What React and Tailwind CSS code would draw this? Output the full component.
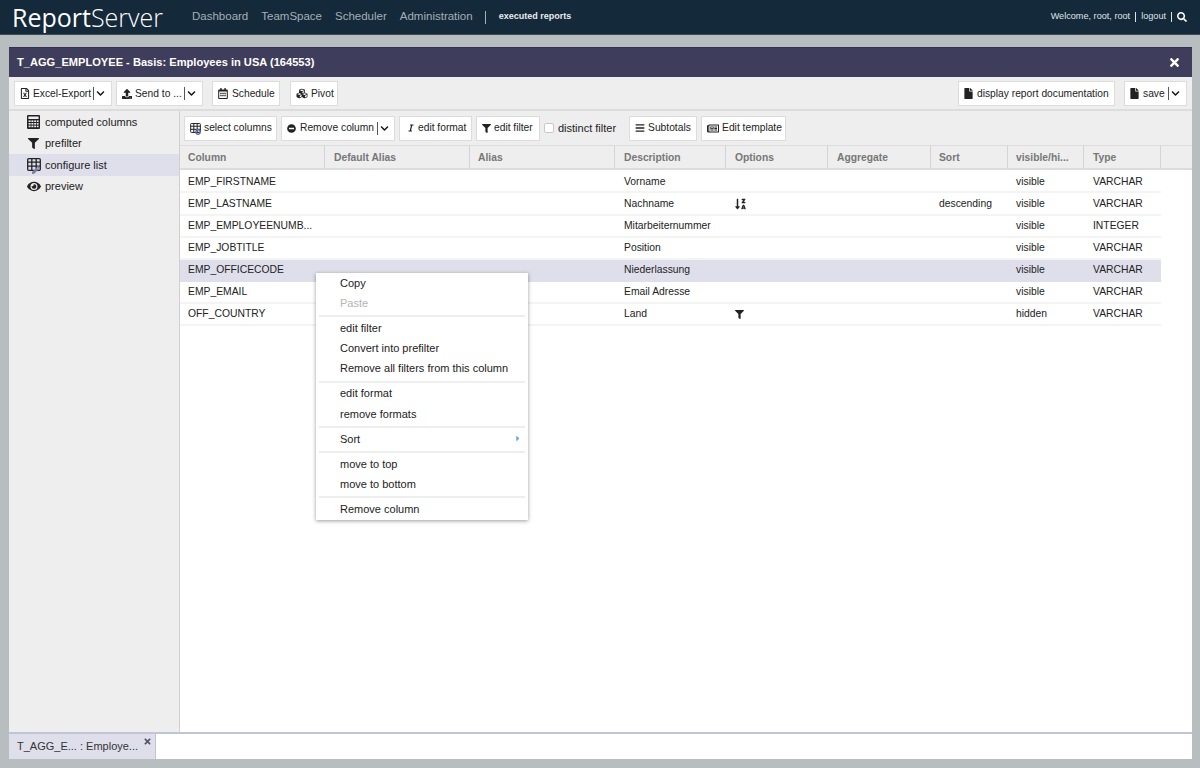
import { FaRegFileExcel, FaChevronDown, FaUpload, FaRegCalendarAlt, FaCubes, FaFile, FaFilter, FaEye, FaMinusCircle, FaItalic, FaBars, FaRegNewspaper, FaSortAlphaDownAlt, FaTimes, FaSearch, FaPen, FaPlusCircle, FaCaretRight } from 'react-icons/fa'

const columns = [
  { name: 'Column', w: 'w-[145px] pl-[8px]' },
  { name: 'Default Alias', w: 'w-[145px] pl-[9px]' },
  { name: 'Alias', w: 'w-[145px] pl-[8px]' },
  { name: 'Description', w: 'w-[111px] pl-[9px]' },
  { name: 'Options', w: 'w-[102px] pl-[9px]' },
  { name: 'Aggregate', w: 'w-[103px] pl-[9px]' },
  { name: 'Sort', w: 'w-[77px] pl-[8px]' },
  { name: 'visible/hi...', w: 'w-[76px] pl-[8px]' },
  { name: 'Type', w: 'w-[77px] pl-[9px]' },
]

const rows = [
  { col: 'EMP_FIRSTNAME', desc: 'Vorname', vis: 'visible', type: 'VARCHAR' },
  { col: 'EMP_LASTNAME', desc: 'Nachname', opt: 'sort', sort: 'descending', vis: 'visible', type: 'VARCHAR' },
  { col: 'EMP_EMPLOYEENUMB...', desc: 'Mitarbeiternummer', vis: 'visible', type: 'INTEGER' },
  { col: 'EMP_JOBTITLE', desc: 'Position', vis: 'visible', type: 'VARCHAR' },
  { col: 'EMP_OFFICECODE', desc: 'Niederlassung', vis: 'visible', type: 'VARCHAR', selected: true },
  { col: 'EMP_EMAIL', desc: 'Email Adresse', vis: 'visible', type: 'VARCHAR' },
  { col: 'OFF_COUNTRY', desc: 'Land', opt: 'filter', vis: 'hidden', type: 'VARCHAR' },
]

const menu = [
  ['Copy', '-Paste'],
  ['edit filter', 'Convert into prefilter', 'Remove all filters from this column'],
  ['edit format', 'remove formats'],
  ['>Sort'],
  ['move to top', 'move to bottom'],
  ['Remove column'],
]

function GridIcon({ className = '' }) {
  return (
    <svg viewBox="0 0 14 13" className={className} fill="none" stroke="currentColor" strokeWidth="1.3">
      <rect x="0.7" y="0.7" width="12.6" height="11.6" rx="1" />
      <path d="M0.7 4.2H13.3M0.7 8.2H13.3M4.8 0.7V12.3M9.2 0.7V12.3" />
    </svg>
  )
}

function CalcIcon({ className = '' }) {
  return (
    <svg viewBox="0 0 13 14" className={className} fill="currentColor">
      <path d="M1 0H12A1 1 0 0 1 13 1V13A1 1 0 0 1 12 14H1A1 1 0 0 1 0 13V1A1 1 0 0 1 1 0ZM1.4 1.4V4H11.6V1.4Z" fillRule="evenodd" />
      <g fill="#eeeeee">
        <rect x="1.6" y="5.4" width="2" height="1.6" />
        <rect x="4.4" y="5.4" width="2" height="1.6" />
        <rect x="7.2" y="5.4" width="2" height="1.6" />
        <rect x="10" y="5.4" width="1.6" height="1.6" />
        <rect x="1.6" y="8" width="2" height="1.6" />
        <rect x="4.4" y="8" width="2" height="1.6" />
        <rect x="7.2" y="8" width="2" height="1.6" />
        <rect x="10" y="8" width="1.6" height="1.6" />
        <rect x="1.6" y="10.6" width="2" height="1.6" />
        <rect x="4.4" y="10.6" width="2" height="1.6" />
        <rect x="7.2" y="10.6" width="2" height="1.6" />
        <rect x="10" y="10.6" width="1.6" height="1.6" />
      </g>
    </svg>
  )
}

function Btn({ icon, children, drop, className = '' }) {
  return (
    <button className={`h-[25px] pl-[5px] shrink-0 flex items-center gap-[3px] bg-white border border-[#dcdcdc] text-[10.25px] text-[#222] whitespace-nowrap ${className}`}>
      <span className="shrink-0 flex items-center">{icon}</span>
      <span>{children}</span>
      {drop && (
        <span className="flex items-center gap-[2px] -ml-[1px]">
          <span className="w-px h-[13px] bg-[#555]" />
          <FaChevronDown className="w-[9px] h-[9px] text-[#111] shrink-0" />
        </span>
      )}
    </button>
  )
}

function SideItem({ icon, label, active }) {
  return (
    <div className={`h-[21.5px] pl-[17px] flex items-center gap-[4px] text-[11px] text-[#222] ${active ? 'bg-[#dfdfeb]' : ''}`}>
      <span className="w-[15px] h-[15px] flex items-center justify-center text-[#222] relative shrink-0">{icon}</span>
      <span>{label}</span>
    </div>
  )
}

export default function App() {
  return (
    <div className="w-[1200px] h-[768px] overflow-hidden bg-[#b8bec0] flex flex-col font-['Liberation_Sans',Arial,sans-serif] relative">
      <div className="h-[35px] shrink-0 bg-[#14293a] border-b border-[#3d4c58] flex items-center pl-[12px] pr-[13px]">
        <div className="w-[180px] text-[25px] leading-none text-white font-['Open_Sans',sans-serif] font-light"><span className="font-normal">Report</span>Server</div>
        <nav className="flex items-center text-[11.5px] text-[#a5afb6] gap-[13px]">
          <span>Dashboard</span>
          <span>TeamSpace</span>
          <span>Scheduler</span>
          <span>Administration</span>
        </nav>
        <span className="w-px h-[13px] bg-[#a5afb6] ml-[12px] mr-[13px]" />
        <span className="text-[9px] font-bold text-[#e8ebee]">executed reports</span>
        <div className="ml-auto flex items-center text-[9.15px] text-[#dfe3e6] gap-[5px]">
          <span>Welcome, root, root</span>
          <span className="w-px h-[10px] bg-[#dfe3e6]" />
          <span>logout</span>
          <span className="w-px h-[10px] bg-[#dfe3e6]" />
          <FaSearch className="w-[10px] h-[10px] text-white" />
        </div>
      </div>

      <div className="mt-[12px] mx-[9px] w-[1183px] h-[685px] flex flex-col bg-[#eeeeee]">
        <div className="h-[30px] shrink-0 bg-[#3f3d5c] border-t border-[#33324c] flex items-center justify-between pl-[8px] pr-[11px]">
          <span className="text-[11.1px] font-bold text-white">T_AGG_EMPLOYEE - Basis: Employees in USA (164553)</span>
          <FaTimes className="w-[13px] h-[13px] text-white -mt-[1px]" />
        </div>
        <div className="h-[34px] shrink-0 pt-[1px] border-b-2 border-[#dcdcdc] flex items-center pl-[5px] pr-[5px]">
          <Btn icon={<FaRegFileExcel className="w-[10px] h-[11px]" />} drop className="w-[98px]">Excel-Export</Btn>
          <Btn icon={<FaUpload className="w-[10px] h-[10px]" />} drop className="w-[87px] ml-[4px]">Send to ...</Btn>
          <Btn icon={<FaRegCalendarAlt className="w-[10px] h-[11px]" />} className="w-[68px] ml-[9px] gap-[4px]">Schedule</Btn>
          <Btn icon={<FaCubes className="w-[12px] h-[11px]" />} className="w-[48px] ml-[10px] gap-[2px] pl-[3px]">Pivot</Btn>
          <Btn icon={<FaFile className="w-[9px] h-[11px]" />} className="w-[157px] ml-auto gap-[4px]">display report documentation</Btn>
          <Btn icon={<FaFile className="w-[9px] h-[11px]" />} drop className="w-[63px] ml-[9px] gap-[4px]">save</Btn>
        </div>

        <div className="flex-1 flex min-h-0">
          <div className="w-[171px] shrink-0 border-r border-[#d0d0d0]">
            <SideItem icon={<CalcIcon className="w-[13px] h-[14px]" />} label="computed columns" />
            <SideItem icon={<FaFilter className="w-[11px] h-[11px]" />} label="prefilter" />
            <SideItem
              active
              icon={<><GridIcon className="w-[14px] h-[13px]" /><FaPen className="absolute left-[6px] top-[9px] w-[8px] h-[8px] text-[#7b7ba3]" /></>}
              label="configure list"
            />
            <SideItem icon={<FaEye className="w-[14px] h-[13px]" />} label="preview" />
          </div>

          <div className="flex-1 flex flex-col bg-white min-w-0">
            <div className="h-[34px] shrink-0 bg-[#eeeeee] flex items-center pl-[4px]">
              <Btn icon={<span className="relative block w-[11px] h-[10px]"><GridIcon className="w-[11px] h-[10px]" /><FaPlusCircle className="absolute left-[5px] top-[6px] w-[6px] h-[6px] text-[#5f6da8]" /></span>} className="w-[93px] gap-[2px]">select columns</Btn>
              <Btn icon={<FaMinusCircle className="w-[9px] h-[9px]" />} drop className="w-[114px] ml-[4px] gap-[4px]">Remove column</Btn>
              <Btn icon={<FaItalic className="w-[8px] h-[8px]" />} className="w-[73px] ml-[4px] gap-[3px] pl-[7px]">edit format</Btn>
              <Btn icon={<FaFilter className="w-[9px] h-[9px]" />} className="w-[64px] ml-[4px]">edit filter</Btn>
              <label className="flex items-center ml-[4px] text-[11px] text-[#222]">
                <span className="w-[10px] h-[10px] rounded-[2px] bg-white border border-[#c8c8c8] mr-[4px]" />
                distinct filter
              </label>
              <Btn icon={<FaBars className="w-[10px] h-[10px]" />} className="w-[68px] ml-[13px]">Subtotals</Btn>
              <Btn icon={<FaRegNewspaper className="w-[12px] h-[11px]" />} className="w-[85px] ml-[4px] gap-[2px] pl-[4px]">Edit template</Btn>
            </div>

            <div className="h-[25px] shrink-0 flex bg-[#eeeeee] border-t border-b-2 border-[#dcdcdc]">
              {columns.map((c) => (
                <div key={c.name} className={`${c.w} shrink-0 pt-[1px] flex items-center text-[10.3px] font-bold text-[#777] border-r border-[#d4d4d4]`}>
                  {c.name}
                </div>
              ))}
            </div>

            <div className="w-[981px] mt-[1.4px]">
              {rows.map((r) => (
                <div key={r.col} className={`h-[22.1px] flex items-center text-[10.35px] text-[#222] border-b-2 ${r.selected ? 'bg-[#dfdfeb] border-[#dfdfeb]' : 'border-[#f4f4f4]'}`}>
                  <div className="w-[435px] pl-[8px] shrink-0">{r.col}</div>
                  <div className="w-[111px] pl-[9px] shrink-0">{r.desc}</div>
                  <div className="w-[102px] pl-[9px] shrink-0">
                    {r.opt === 'sort' && <FaSortAlphaDownAlt className="w-[11px] h-[12px]" />}
                    {r.opt === 'filter' && <FaFilter className="w-[9px] h-[9px]" />}
                  </div>
                  <div className="w-[103px] shrink-0" />
                  <div className="w-[77px] pl-[8px] shrink-0">{r.sort}</div>
                  <div className="w-[76px] pl-[8px] shrink-0">{r.vis}</div>
                  <div className="w-[77px] pl-[9px] shrink-0">{r.type}</div>
                </div>
              ))}
            </div>
          </div>
        </div>
      </div>

      <div className="mx-[9px] w-[1183px] h-[27px] shrink-0 flex bg-white border-t-2 border-[#c3c3d6]">
        <div className="w-[147px] bg-[#dfdfeb] border-r border-[#c3c3d6] pl-[8px] flex items-center text-[11px] text-[#333] relative">
          T_AGG_E... : Employe...
          <FaTimes className="absolute right-[3px] top-[3px] w-[9px] h-[9px] text-[#55556f]" />
        </div>
      </div>

      <div className="absolute left-[316px] top-[273px] w-[212px] h-[247px] bg-white shadow-[0_1px_4px_rgba(0,0,0,0.4)] text-[11px] text-[#222]">
        {menu.map((group, i) => (
          <div key={i} className={`mx-[3px] ${i > 0 ? 'mt-[1.8px] pt-[1px] border-t-2 border-[#eeeeee]' : ''}`}>
            {group.map((item) => {
              const disabled = item[0] === '-'
              const sub = item[0] === '>'
              const label = disabled || sub ? item.slice(1) : item
              return (
                <div key={label} className={`h-[20.2px] pl-[21px] pr-[3px] flex items-center justify-between ${disabled ? 'text-[#b5b5b5]' : ''}`}>
                  <span>{label}</span>
                  {sub && <FaCaretRight className="w-[8px] h-[9px] text-[#6aa7e0]" />}
                </div>
              )
            })}
          </div>
        ))}
      </div>
    </div>
  )
}
